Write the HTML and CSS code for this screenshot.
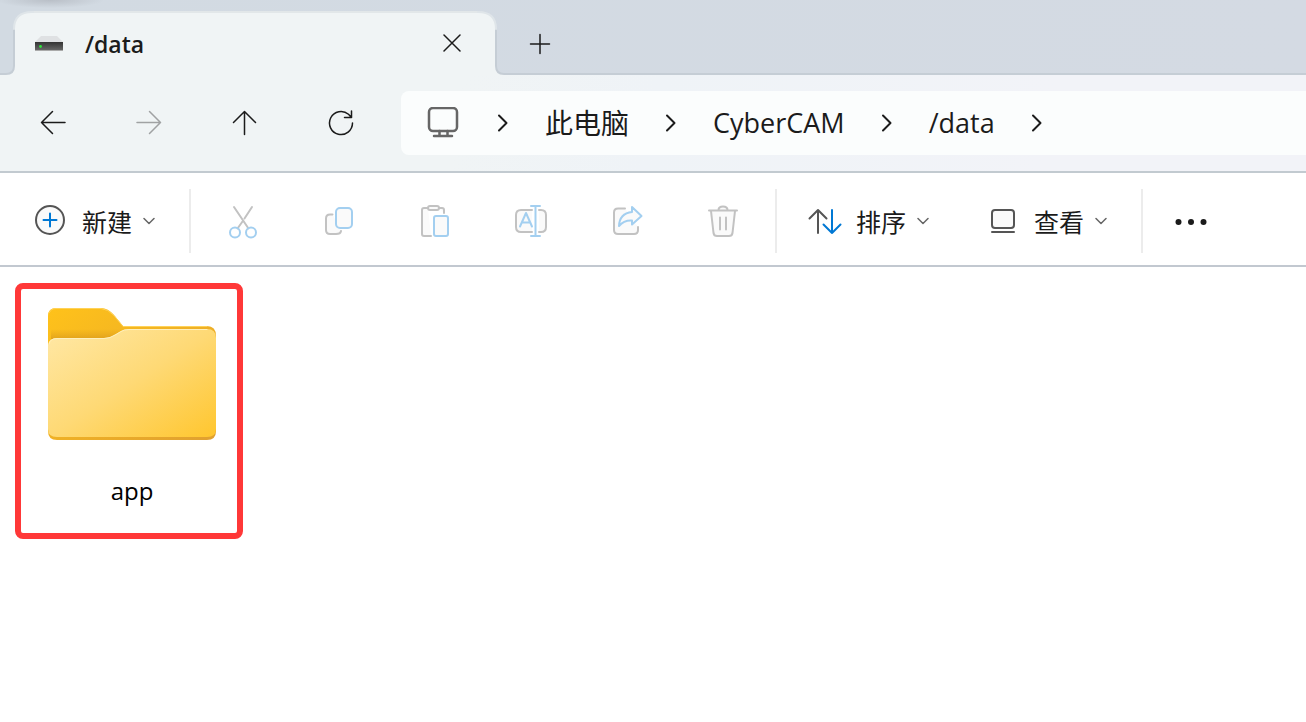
FILE: index.html
```html
<!DOCTYPE html>
<html lang="zh-CN">
<head>
<meta charset="utf-8">
<meta name="viewport" content="width=device-width, initial-scale=1">
<title>/data</title>
<link rel="stylesheet" href="styles.css">
</head>
<body>
<header class="tabbar">
  <svg class="edge" width="34" height="75" viewBox="0 0 34 75" aria-hidden="true">
    <path class="edge-fill" d="M0 75V74H6Q14 74 14 66V29Q14 12 32 12H34V75Z"/>
    <path class="edge-line" d="M0 74H6Q14 74 14 66V29"/>
    <path class="edge-top" d="M14 29Q14 12 32 12H34"/>
  </svg>
  <div class="tab">
    <svg width="30" height="18" viewBox="0 0 30 18" aria-hidden="true">
      <defs><linearGradient id="drive" x2="0" y2="1"><stop stop-color="#333"/><stop offset="1" stop-color="#666"/></linearGradient></defs>
      <path d="M7 1H23L29 7H1Z" fill="#dfe1e3"/>
      <path d="M1 7H29V15H1Z" fill="url(#drive)"/>
      <path class="drive-foot" d="M1 15.500H29"/>
      <circle cx="6.500" cy="11.500" r="1.400" fill="#2ee63a"/>
    </svg>
    <span class="tab-title">/data</span>
    <button class="close" aria-label="关闭">
      <svg width="20" height="20" viewBox="0 0 20 20"><path d="M2 1 18 17M18 1 2 17"/></svg>
    </button>
  </div>
  <svg class="edge" width="34" height="75" viewBox="0 0 34 75" aria-hidden="true">
    <path class="edge-fill" d="M34 75V74H27Q19 74 19 66V29Q19 12 1 12H0V75Z"/>
    <path class="edge-line" d="M34 74H27Q19 74 19 66V29"/>
    <path class="edge-top" d="M19 29Q19 12 1 12H0"/>
  </svg>
  <div class="strip">
    <button class="add" aria-label="新标签页">
      <svg width="22" height="22" viewBox="0 0 22 22"><path d="M11 1.500V20.500M1.500 11H20.500"/></svg>
    </button>
  </div>
</header>

<nav class="nav">
  <button class="nav-btn" aria-label="后退"><svg width="26" height="26" viewBox="0 0 26 26"><path d="M12.500 1.500 1.500 12.500 12.500 23.500M1.500 12.500H25"/></svg></button>
  <button class="nav-btn" aria-label="前进" disabled><svg width="26" height="26" viewBox="0 0 26 26"><path d="M13.500 1.500 24.500 12.500 13.500 23.500M24.500 12.500H1"/></svg></button>
  <button class="nav-btn" aria-label="向上"><svg width="26" height="26" viewBox="0 0 26 26"><path d="M1.500 12.500 12.500 1.500 23.500 12.500M12.500 1.500V24.500"/></svg></button>
  <button class="nav-btn" aria-label="刷新"><svg width="26" height="26" viewBox="0 0 26 26"><path d="M24.500 13A11.500 11.500 0 1 1 20.500 4.300L23.500 7.500M23.500 1V7.500H16.500"/></svg></button>
  <div class="address">
    <svg width="32" height="32" viewBox="0 0 32 32" class="pc" aria-hidden="true"><rect x="2" y="1" width="28" height="23" rx="4"/><path d="M12.500 24V29M20.500 24V29M7 29H25"/></svg>
    <svg class="sep" width="12" height="18" viewBox="0 0 12 18"><path d="M2 1.500 9.500 9 2 16.500"/></svg>
    <a class="cjk" href="#">此电脑</a>
    <svg class="sep" width="12" height="18" viewBox="0 0 12 18"><path d="M2 1.500 9.500 9 2 16.500"/></svg>
    <a href="#">CyberCAM</a>
    <svg class="sep" width="12" height="18" viewBox="0 0 12 18"><path d="M2 1.500 9.500 9 2 16.500"/></svg>
    <a href="#">/data</a>
    <svg class="sep" width="12" height="18" viewBox="0 0 12 18"><path d="M2 1.500 9.500 9 2 16.500"/></svg>
  </div>
</nav>

<div class="toolbar">
  <button class="menu new">
    <svg width="32" height="32" viewBox="0 0 32 32"><circle class="dark pale" cx="16" cy="15" r="14"/><path class="accent" d="M16 8.500V21.500M9.500 15H22.500"/></svg>
    <span>新建</span>
    <svg class="chev" width="12" height="8" viewBox="0 0 12 8"><path d="M1 1.500 6 6.500 11 1.500"/></svg>
  </button>
  <div class="group">
    <button class="tool" aria-label="剪切"><svg width="34" height="34" viewBox="0 0 34 34"><path class="grey" d="M8 2 22.500 23.500M26 2 18.500 13.500M16.500 16.500 11.500 23.500"/><circle class="blue" cx="9" cy="27.500" r="5"/><circle class="blue" cx="25" cy="27.500" r="5"/></svg></button>
    <button class="tool" aria-label="复制"><svg width="34" height="34" viewBox="0 0 34 34"><path class="grey pale" d="M10.500 9.500H8Q4 9.500 4 13.500V25Q4 29 8 29H14Q18.500 29 19 26"/><rect class="blue pale" x="14" y="3" width="16" height="20" rx="4"/></svg></button>
    <button class="tool" aria-label="粘贴"><svg width="34" height="34" viewBox="0 0 34 34"><path class="grey pale" d="M13 31H6Q4 31 4 29V5Q4 3 6 3H10M21 3H24Q26 3 26 5V8"/><rect class="grey pale" x="10" y="1" width="11" height="4" rx="2"/><rect class="blue pale" x="16" y="11" width="14" height="20" rx="2"/></svg></button>
    <button class="tool" aria-label="重命名"><svg width="34" height="34" viewBox="0 0 34 34"><path class="grey pale" d="M18 5H7Q2 5 2 10V22Q2 27 7 27H18M25 5H27Q32 5 32 10V22Q32 27 27 27H25"/><path class="blue" d="M6 21.500 12 8 18 21.500M8 17.500H16M17 1H26M17 31H26M21.500 1V31"/></svg></button>
    <button class="tool" aria-label="共享"><svg width="34" height="34" viewBox="0 0 34 34"><path class="grey pale" d="M15 3.500H8Q4 3.500 4 7.500V25Q4 29 8 29H24Q28 29 28 25V22"/><path class="blue pale" d="M22 2 31.500 11 22 19.500V15.500Q14 15 9 21Q9.500 8.500 22 7Z"/></svg></button>
    <button class="tool" aria-label="删除"><svg width="34" height="34" viewBox="0 0 34 34"><path class="pale grey" d="M5 6 7.500 28Q8 31 11 31H23Q26 31 26.500 28L29 6M3 5.500H31M12.500 5Q12.500 1.500 17 1.500Q21.500 1.500 21.500 5M14 12.500V24.500M20 12.500V24.500"/></svg></button>
  </div>
  <div class="group menus">
    <button class="menu sort">
      <svg width="34" height="28" viewBox="0 0 34 28"><path class="dark" d="M1.500 11.500 10 3 18.500 11.500M10 3V26"/><path class="accent" d="M24 3V26M15.500 17.500 24 26 32.500 17.500"/></svg>
      <span>排序</span>
      <svg class="chev" width="12" height="8" viewBox="0 0 12 8"><path d="M1 1.500 6 6.500 11 1.500"/></svg>
    </button>
    <button class="menu view">
      <svg width="26" height="26" viewBox="0 0 26 26"><rect class="dark pale" x="2" y="2" width="22" height="18" rx="3"/><path class="dark" d="M2 24H24"/></svg>
      <span>查看</span>
      <svg class="chev" width="12" height="8" viewBox="0 0 12 8"><path d="M1 1.500 6 6.500 11 1.500"/></svg>
    </button>
  </div>
  <button class="more" aria-label="更多"><svg width="34" height="8" viewBox="0 0 34 8"><circle cx="3.500" cy="5" r="3"/><circle cx="16" cy="5" r="3"/><circle cx="28.500" cy="5" r="3"/></svg></button>
</div>

<main class="files">
  <button class="item">
    <svg width="168" height="134" viewBox="0 0 168 134" aria-hidden="true">
      <defs>
        <linearGradient id="back" x2="1" y2="1"><stop stop-color="#ffc21a"/><stop offset="1" stop-color="#e0a030"/></linearGradient>
        <linearGradient id="front" x2="1" y2="1"><stop stop-color="#ffe8a6"/><stop offset=".5" stop-color="#fed975"/><stop offset="1" stop-color="#ffc62e"/></linearGradient>
        <linearGradient id="shade" x2="0" y2="1"><stop stop-color="#d99a1b" stop-opacity="0"/><stop offset="1" stop-color="#d2921a" stop-opacity=".6"/></linearGradient>
      </defs>
      <path d="M0 38V9Q0 1 8 1H53Q60 1 66 8L75 19H159Q168 19 168 29V124Q168 133 159 133H9Q0 133 0 124Z" fill="url(#back)"/>
      <path d="M3 22H76L64 30Q60 32 55 32H3Z" fill="url(#shade)"/>
      <path class="rim" d="M1 6Q3 1.500 8 1.500H53Q60 2 66 8.500L75 19.500H159"/>
      <path d="M0 38Q1 31 9 31H56Q62 31 68 27L73 24Q76 22 81 22H159Q168 22 168 31V122Q168 130 159 130H9Q0 130 0 122Z" fill="url(#front)"/>
      <path class="glint" d="M1 37Q2 31.500 9 31.500H56Q62 31.500 68 27.500L73 24.500Q76 22.500 81 22.500H159"/>
    </svg>
    <span>app</span>
  </button>
</main>
</body>
</html>
```
FILE: styles.css
```css
* { box-sizing: border-box; }

body {
  margin: 0;
  min-height: 100vh;
  background: #fff;
  color: #1b1b1b;
  font-family: "Open Sans", "Noto Sans CJK SC", sans-serif;
}

button {
  margin: 0;
  padding: 0;
  border: 0;
  background: none;
  color: inherit;
  font: inherit;
  display: flex;
  align-items: center;
  justify-content: center;
}

svg {
  display: block;
  flex: none;
  fill: none;
  stroke-width: 2;
  stroke-linecap: round;
  stroke-linejoin: round;
}

.tabbar {
  display: flex;
  height: 75px;
  background:
    radial-gradient(ellipse 54px 8px at 50px 0, #b9bfc7, #b9bfc700) no-repeat,
    linear-gradient(90deg, #d2dae2, #d4dae3);
}

.edge-fill { fill: #f0f4f5; }
.edge-line { stroke: #c5cdd5; }
.edge-top { stroke: #dfe5e9; }

.tab {
  display: flex;
  align-items: center;
  width: 443px;
  margin-top: 11px;
  border-top: 2px solid #e2e7e9;
  background: #f0f4f5;
}

.drive-foot { stroke: #aaa; stroke-width: 1; stroke-linecap: butt; }

.tab-title {
  flex: 1;
  margin-left: 21px;
  font-size: 23px;
  font-weight: 600;
  line-height: 32px;
}

.close { width: 32px; height: 32px; margin-right: 9px; }
.close svg, .add svg { stroke: #1b1b1b; stroke-width: 1.5; }

.strip {
  flex: 1;
  display: flex;
  align-items: center;
  padding-top: 14px;
  padding-left: 13px;
  border-bottom: 2px solid #c5cdd5;
}
.add { width: 32px; height: 32px; }

.nav {
  display: flex;
  align-items: center;
  padding: 16px 0 16px 5px;
  background: linear-gradient(100deg, #f0f4f5 35%, #eff3f7 50%, #f2f3f8 80%);
  border-bottom: 2px solid #c2cad0;
}
.nav-btn { width: 96px; height: 64px; }
.nav-btn svg { stroke: #1b1b1b; stroke-width: 1.5; }
.nav-btn:disabled svg { stroke: #a0a2a3; }

.address {
  flex: 1;
  display: flex;
  align-items: center;
  gap: 36px;
  height: 64px;
  margin-left: 12px;
  padding-left: 26px;
  border-radius: 8px 0 0 8px;
  background: #fbfdfd;
  font-size: 27px;
  line-height: 40px;
}
.address a { color: inherit; text-decoration: none; }
.address .cjk { font-size: 28px; }
.pc { margin-right: 2px; stroke: #666; stroke-width: 2.5; }
.sep { stroke: #1b1b1b; }

.toolbar {
  display: flex;
  align-items: center;
  height: 94px;
  padding-top: 4px;
  padding-left: 34px;
  border-bottom: 2px solid #c2c8d0;
  font-size: 25px;
  line-height: 36px;
}
.new { padding-right: 34px; }
.menu { gap: 11px; }
.menu span { margin-left: 5px; padding-top: 2px; }
.sort span { margin-left: 3px; }
.view span { margin-left: 7px; }
.chev { stroke: #666; stroke-width: 1.5; }

.group {
  display: flex;
  height: 64px;
  padding: 0 4px;
  border: solid #ececec;
  border-width: 0 2px;
}
.tool { width: 96px; padding-top: 2px; }
.menus {
  gap: 61px;
  padding: 0 34px 0 31px;
  border-left: 0;
}
.more { padding: 12px 32px; }
.more svg { fill: #1b1b1b; }

.dark { stroke: #555; }
.accent { stroke: #0078d4; }
.grey { stroke: #c2c2c2; }
.blue { stroke: #a3cff0; }
.pale { fill: #fafafa; }

.files {
  display: flex;
  padding: 16px 15px;
}
.item {
  flex-direction: column;
  gap: 32px;
  width: 228px;
  padding: 18px 0 25px 6px;
  border: 6px solid #ff3838;
  border-radius: 8px;
  color: #000;
  font-size: 24px;
  line-height: 35px;
}
.rim { stroke: #ffd257; stroke-width: 1; }
.glint { stroke: #fff0bd; stroke-width: 1; }
```
